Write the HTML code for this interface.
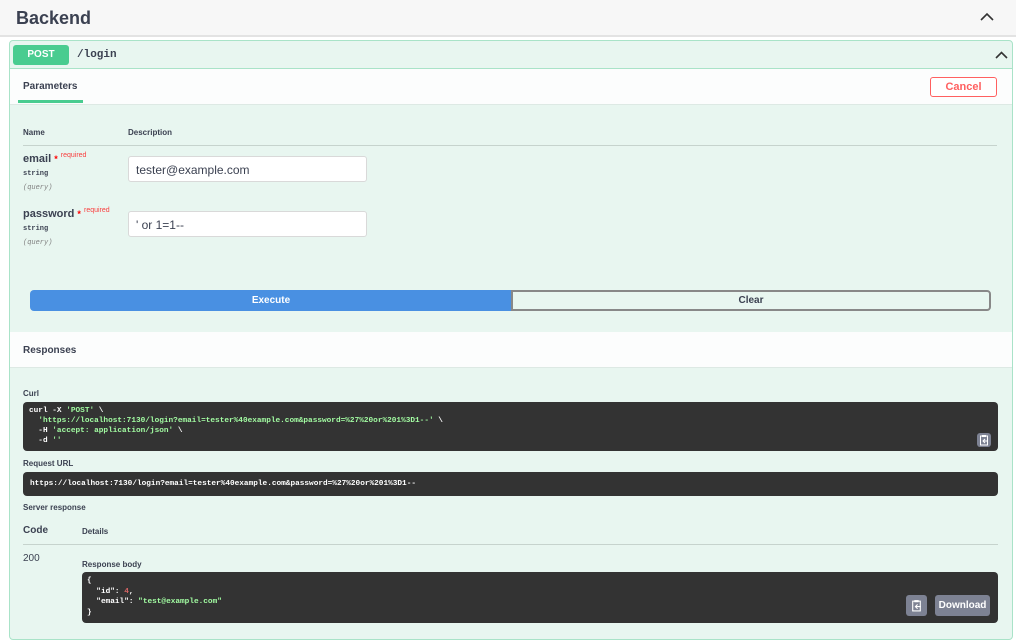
<!DOCTYPE html>
<html><head><meta charset="utf-8"><style>
*{box-sizing:border-box;margin:0;padding:0}
body{width:1024px;height:629px;overflow:hidden;background:#fff;font-family:"Liberation Sans",sans-serif;color:#3b4151;position:relative}
.a{position:absolute}
.mono{font-family:"Liberation Mono",monospace}
.dark{background:#333;border-radius:4px;color:#fff;font-family:"Liberation Mono",monospace;font-weight:bold;font-size:7.75px}
.g{color:#a2fca2}
.r{color:#d36363}
.btn{background:#7d8293;border-radius:3px}
</style></head><body>
<div class="a" style="left:0;top:0;width:1016px;height:37px;background:#f7f7f7;border-bottom:2px solid #e3e3e3"></div>
<div class="a" style="left:16px;top:8px;font-size:18px;font-weight:bold">Backend</div>
<svg class="a" style="left:980px;top:12px" width="14" height="10" viewBox="0 0 14 10"><path d="M1 8 L7 2 L13 8" stroke="#333" stroke-width="1.6" fill="none"/></svg>
<div class="a" style="left:9px;top:40px;width:1004px;height:600px;background:#e8f6f0;border:1px solid #a9e3c8;border-radius:4px"></div>
<div class="a" style="left:10px;top:68px;width:1002px;height:1px;background:#a9e3c8"></div>
<div class="a" style="left:13px;top:45px;width:56px;height:20px;background:#49cc90;border-radius:3px;color:#fff;font-weight:bold;font-size:10px;text-align:center;line-height:20px">POST</div>
<div class="a mono" style="left:77px;top:49px;font-size:11px;font-weight:bold;color:#3b4151">/login</div>
<svg class="a" style="left:995px;top:51px" width="13" height="9" viewBox="0 0 13 9"><path d="M1 7 L6.5 1.5 L12 7" stroke="#333" stroke-width="1.6" fill="none"/></svg>
<div class="a" style="left:10px;top:69px;width:1002px;height:36px;background:#fcfdfd;border-bottom:1px solid #dde9e4"></div>
<div class="a" style="left:23px;top:81px;font-size:10px;font-weight:bold">Parameters</div>
<div class="a" style="left:18px;top:100px;width:65px;height:3px;background:#49cc90"></div>
<div class="a" style="left:930px;top:77px;width:67px;height:20px;border:1px solid #ff6060;border-radius:3px;color:#ff6060;font-size:11px;font-weight:bold;text-align:center;line-height:18px;background:#fff">Cancel</div>
<div class="a" style="left:23px;top:128px;font-size:8px;font-weight:bold">Name</div>
<div class="a" style="left:128px;top:128px;font-size:8px;font-weight:bold">Description</div>
<div class="a" style="left:23px;top:145px;width:974px;height:1px;background:#c6d3cd"></div>
<div class="a" style="left:23px;top:153px;font-size:11px;font-weight:bold">email <span style="color:#f00;font-size:9px">*</span> <span style="color:#f93e3e;font-size:7px;position:relative;top:-5px;font-weight:normal">required</span></div>
<div class="a mono" style="left:23px;top:170px;font-size:7px;font-weight:bold">string</div>
<div class="a mono" style="left:23px;top:184px;font-size:7px;font-style:italic;color:#808080">(query)</div>
<div class="a" style="left:128px;top:156px;width:239px;height:26px;background:#fff;border:1px solid #d9d9d9;border-radius:3px;font-size:12px;padding:6px 7px">tester@example.com</div>
<div class="a" style="left:23px;top:208px;font-size:11px;font-weight:bold">password <span style="color:#f00;font-size:9px">*</span> <span style="color:#f93e3e;font-size:7px;position:relative;top:-5px;font-weight:normal">required</span></div>
<div class="a mono" style="left:23px;top:225px;font-size:7px;font-weight:bold">string</div>
<div class="a mono" style="left:23px;top:239px;font-size:7px;font-style:italic;color:#808080">(query)</div>
<div class="a" style="left:128px;top:211px;width:239px;height:26px;background:#fff;border:1px solid #d9d9d9;border-radius:3px;font-size:12px;padding:6px 7px">' or 1=1--</div>
<div class="a" style="left:30px;top:290px;width:482px;height:21px;background:#4990e2;border-radius:4px 0 0 4px;color:#fff;font-size:10px;font-weight:bold;text-align:center;line-height:21px">Execute</div>
<div class="a" style="left:511px;top:290px;width:480px;height:21px;border:2px solid #888;border-radius:0 4px 4px 0;color:#3b4151;font-size:10px;font-weight:bold;text-align:center;line-height:17px;background:transparent">Clear</div>
<div class="a" style="left:10px;top:332px;width:1002px;height:36px;background:#fcfdfd;border-bottom:1px solid #dde9e4"></div>
<div class="a" style="left:23px;top:345px;font-size:10px;font-weight:bold">Responses</div>
<div class="a" style="left:23px;top:389px;font-size:8px;font-weight:bold">Curl</div>
<div class="a dark" style="left:23px;top:402px;width:975px;height:49px;padding:4px 6px;line-height:10px;white-space:pre">curl -X <span class="g">'POST'</span> \
  <span class="g">'https://localhost:7130/login?email=tester%40example.com&amp;password=%27%20or%201%3D1--'</span> \
  -H <span class="g">'accept: application/json'</span> \
  -d <span class="g">''</span></div>
<div class="a btn" style="left:977px;top:433px;width:14px;height:14px"></div>
<svg class="a" style="left:979px;top:434px" width="10" height="12" viewBox="0 0 10 12"><rect x="1.5" y="2" width="7" height="9" fill="none" stroke="#fff" stroke-width="1"/><rect x="3" y="1" width="4" height="2" fill="#fff"/><path d="M4 7h5M6 5l-2 2 2 2" stroke="#fff" fill="none"/></svg>
<div class="a" style="left:23px;top:459px;font-size:8px;font-weight:bold">Request URL</div>
<div class="a dark" style="left:23px;top:472px;width:975px;height:24px;padding:7px 7px;line-height:10px">https://localhost:7130/login?email=tester%40example.com&amp;password=%27%20or%201%3D1--</div>
<div class="a" style="left:23px;top:503px;font-size:8px;font-weight:bold">Server response</div>
<div class="a" style="left:23px;top:525px;font-size:10px;font-weight:bold">Code</div>
<div class="a" style="left:82px;top:527px;font-size:8px;font-weight:bold">Details</div>
<div class="a" style="left:23px;top:544px;width:975px;height:1px;background:#c6d3cd"></div>
<div class="a" style="left:23px;top:553px;font-size:10px">200</div>
<div class="a" style="left:82px;top:560px;font-size:8px;font-weight:bold">Response body</div>
<div class="a dark" style="left:82px;top:572px;width:916px;height:51px;padding:4px 5px;line-height:10.5px;white-space:pre">{
  "id": <span class="r">4</span>,
  "email": <span class="g">"test@example.com"</span>
}</div>
<div class="a btn" style="left:906px;top:595px;width:21px;height:21px"></div>
<svg class="a" style="left:911px;top:599px" width="11" height="13" viewBox="0 0 10 12"><rect x="1.5" y="2" width="7" height="9" fill="none" stroke="#fff" stroke-width="1"/><rect x="3" y="1" width="4" height="2" fill="#fff"/><path d="M4 7h5M6 5l-2 2 2 2" stroke="#fff" fill="none"/></svg>
<div class="a btn" style="left:935px;top:595px;width:55px;height:21px;color:#fff;font-size:10px;font-weight:bold;text-align:center;line-height:21px">Download</div>
</body></html>
